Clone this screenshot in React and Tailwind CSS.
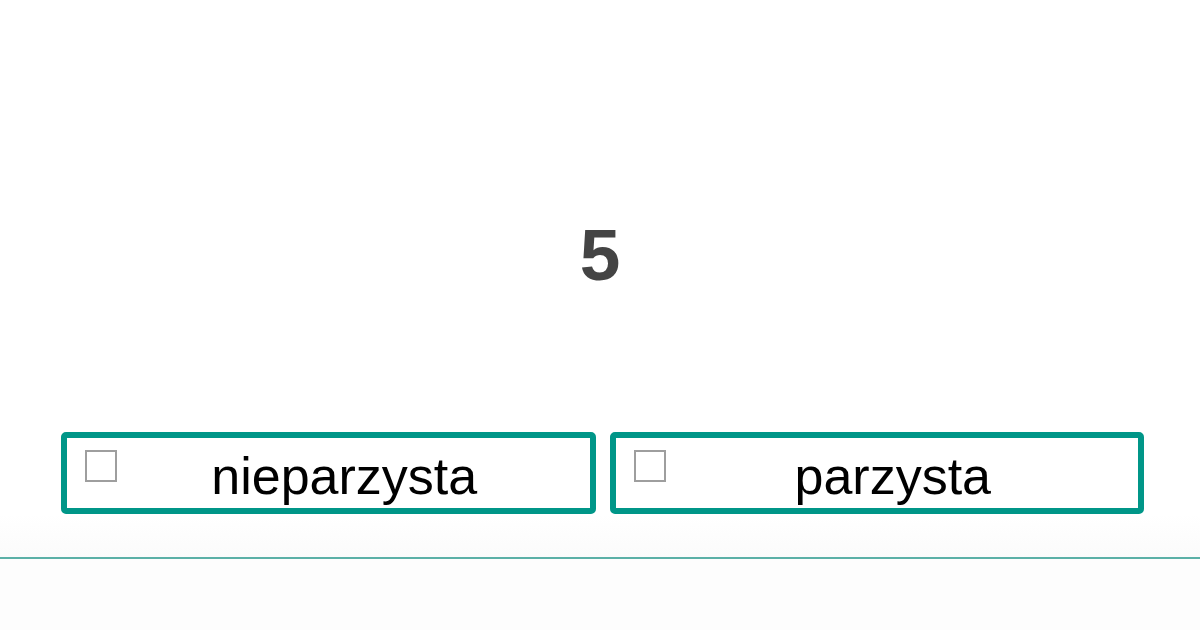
const OPTIONS = ['nieparzysta', 'parzysta'];

function Option({ label }) {
  return (
    <div className="flex-1 h-[82px] border-[6px] border-[#009688] rounded-[5px] bg-white flex items-start pl-[18px]">
      <div className="mt-[12px] w-[32px] h-[32px] shrink-0 border-2 border-[#9e9e9e] bg-white" />
      <span className="flex-1 -ml-[18px] pt-[3px] text-center text-[52px] leading-[70px] text-black">
        {label}
      </span>
    </div>
  );
}

export default function App() {
  return (
    <div
      className="w-[1200px] h-[630px] bg-white flex flex-col overflow-hidden"
      style={{ fontFamily: '"Liberation Sans", Arial, sans-serif' }}
    >
      <div className="h-[432px] flex flex-col items-center pt-[218px]">
        <span className="text-[73px] leading-none font-bold text-[#444444]">5</span>
      </div>

      <div className="flex gap-[14px] pl-[61px] pr-[56px]">
        {OPTIONS.map(o => (
          <Option key={o} label={o} />
        ))}
      </div>

      <div className="h-[43px] bg-gradient-to-b from-white to-[#fbfbfb]" />
      <div className="h-[2px] bg-[#5bb0a7]" />
      <div className="flex-1 bg-[#fdfdfd]" />
    </div>
  );
}
